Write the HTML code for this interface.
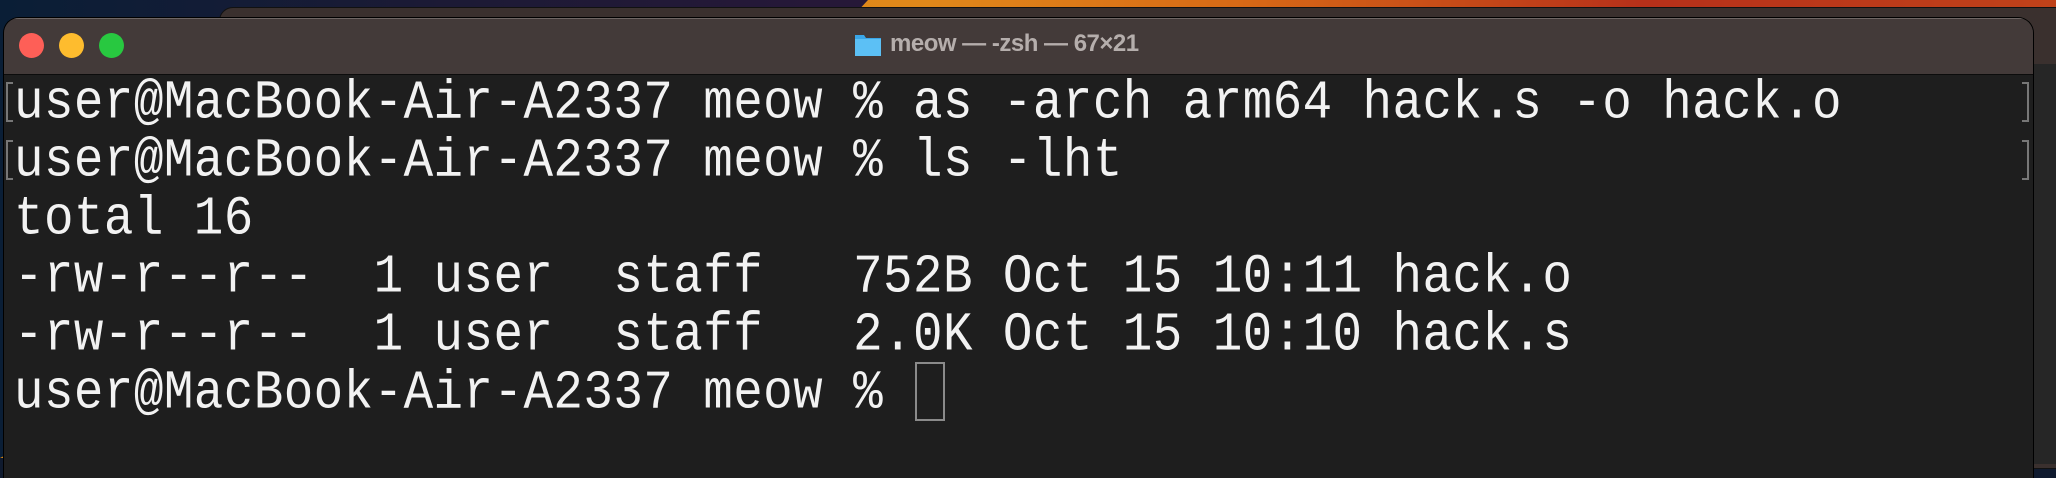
<!DOCTYPE html>
<html><head><meta charset="utf-8"><style>
html,body{margin:0;padding:0;width:2056px;height:458px;overflow:hidden;background:#0f1a2e;}
.bg{position:absolute;inset:0;background:linear-gradient(90deg,#d6840f 0%,#e0881a 45%,#d86a16 60%,#b7301a 80%,#c0421a 100%);}
.wedge{position:absolute;left:0;top:0;width:2056px;height:458px;background:linear-gradient(90deg,#0a1e36,#1c1a35 450px,#261838 820px);clip-path:polygon(0 0,868px 0,840px 30px,0 458px);}
.back{position:absolute;left:219px;top:7px;width:1900px;height:460px;background:#3a302e;border-radius:14px;border:1px solid #111;}
.backbody{position:absolute;left:2034px;top:64px;width:30px;height:400px;background:#262626;}
.win{position:absolute;left:4px;top:18px;width:2029px;height:460px;background:#1e1e1e;border-radius:15px 15px 0 0;overflow:hidden;box-shadow:0 0 0 1px #000;}
.tb{position:absolute;left:0;top:0;width:100%;height:56px;background:#433a39;border-bottom:1px solid #0c0c0c;box-shadow:inset 0 1px 0 #6e6664;}
.dot{position:absolute;top:15px;width:25px;height:25px;border-radius:50%;}
.title{position:absolute;left:886px;top:12px;font:bold 24px "Liberation Sans",sans-serif;color:#b5aeac;white-space:nowrap;letter-spacing:-0.5px;}
.fold{position:absolute;left:850px;top:14px;width:28px;height:25px;}
.t{position:absolute;left:10px;font-family:"Liberation Mono",monospace;font-size:49.2px;letter-spacing:0.45px;color:#f2f2f2;white-space:pre;transform:scaleY(1.12);transform-origin:0 100%;line-height:1;}
.br{position:absolute;width:5px;height:36px;border:2px solid #777;}
.cur{position:absolute;left:911px;top:344px;width:26px;height:55px;border:2px solid #8a8a8a;}
</style></head><body>
<div class="bg"></div><div class="wedge"></div>
<div class="back"></div><div class="backbody"></div>
<div class="win">
 <div class="tb">
  <div class="dot" style="left:15px;background:#fe5f57"></div>
  <div class="dot" style="left:55px;background:#febc2e"></div>
  <div class="dot" style="left:95px;background:#28c840"></div>
  <svg class="fold" viewBox="0 0 28 25"><path d="M1 3h9l2 3h15v18H1z" fill="#3aa6e8"/><rect x="1" y="7" width="26" height="17" fill="#5cc0f5"/></svg>
  <div class="title">meow — -zsh — 67×21</div>
 </div>
 <div class="br" style="left:2px;top:64px;border-right:none"></div>
 <div class="br" style="left:2px;top:122px;border-right:none"></div>
 <div class="br" style="left:2018px;top:64px;border-left:none"></div>
 <div class="br" style="left:2018px;top:122px;border-left:none"></div>
 <div class="t" style="top:64px">user@MacBook-Air-A2337 meow % as -arch arm64 hack.s -o hack.o</div>
 <div class="t" style="top:122px">user@MacBook-Air-A2337 meow % ls -lht</div>
 <div class="t" style="top:180px">total 16</div>
 <div class="t" style="top:238px">-rw-r--r--  1 user  staff   752B Oct 15 10:11 hack.o</div>
 <div class="t" style="top:296px">-rw-r--r--  1 user  staff   2.0K Oct 15 10:10 hack.s</div>
 <div class="t" style="top:354px">user@MacBook-Air-A2337 meow % </div>
 <div class="cur"></div>
</div>
</body></html>
